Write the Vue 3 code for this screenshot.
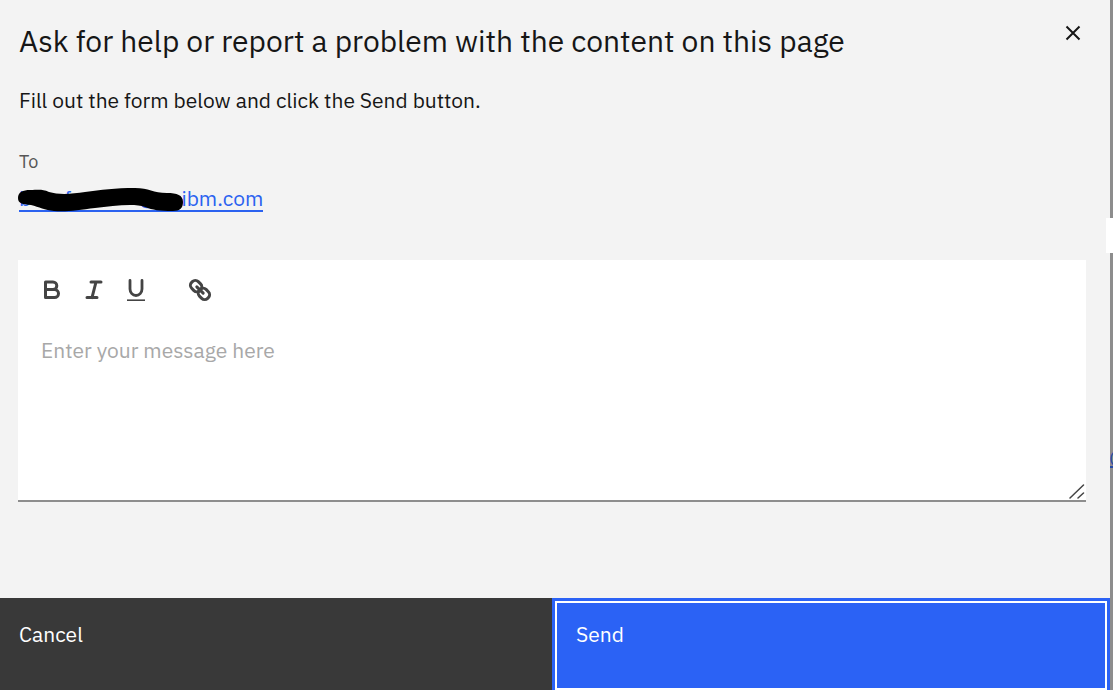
<script setup>
import { ref } from 'vue'

const message = ref('')
</script>

<template>
  <div class="page">
    <form class="dialog" role="dialog" aria-labelledby="dialog-title" @submit.prevent>
      <header class="head">
        <h1 id="dialog-title">Ask for help or report a problem with the content on this page</h1>
        <button class="close" type="button" aria-label="Close">
          <svg viewBox="0 0 16 16" width="16" height="16"><path d="M1.5 1.5l13 13M14.5 1.5l-13 13" /></svg>
        </button>
      </header>

      <div class="body">
        <p class="intro">Fill out the form below and click the Send button.</p>
        <p class="label">To</p>
        <div class="recipient">
          <a href="#">b••••f••••••••@•••ibm.com</a>
          <svg class="mark" viewBox="0 0 168 26" width="168" height="26" aria-hidden="true">
            <path d="M1 11C1 5 6 3 13 3C22 3 25 2 32 5C42 8 55 7 68 5C84 3 98 1 118 1C132 1 136 6 150 6C160 6 166 8 166 15C166 21 163 24 156 24C142 24 136 23 128 20C117 16 96 19 78 21C62 23 50 25 37 24C28 23 22 20 14 18C6 17 1 17 1 11Z" />
          </svg>
        </div>

        <div class="editor">
          <div class="tools">
            <button type="button" aria-label="Bold">
              <svg viewBox="0 0 24 24" width="24" height="24"><path class="heavy" d="M5.5 4h7.5a3.8 3.8 0 0 1 0 7.6H5.500zM5.500 11.600h9a4 4 0 0 1 0 8H5.500z" /></svg>
            </button>
            <button type="button" aria-label="Italic">
              <svg viewBox="0 0 24 24" width="24" height="24"><path class="heavy" d="M9 4h10M5 19.600h10M14 4l-4 15.600" /></svg>
            </button>
            <button type="button" aria-label="Underline">
              <svg viewBox="0 0 24 24" width="24" height="24"><path class="medium" d="M6 2.500v8.500a6 6.500 0 0 0 12 0V2.500" /><path class="thin" d="M3 22.200h18" /></svg>
            </button>
            <button class="link" type="button" aria-label="Insert link">
              <svg viewBox="0 0 24 24" width="24" height="24">
                <g transform="rotate(45 12 12)" class="heavy">
                  <rect x="0.7" y="7.3" width="11.6" height="9.4" rx="4.2" />
                  <rect x="11.7" y="7.3" width="11.6" height="9.4" rx="4.2" />
                  <path d="M7.5 12h9" />
                </g>
              </svg>
            </button>
          </div>
          <textarea v-model="message" aria-label="Message" placeholder="Enter your message here"></textarea>
          <svg class="grip" viewBox="0 0 16 16" width="16" height="16" aria-hidden="true"><path d="M1 14L14.500 1M9 14l5.500-5" /></svg>
        </div>
      </div>

      <footer class="actions">
        <button class="cancel" type="button">Cancel</button>
        <button class="send" type="submit">Send</button>
      </footer>
    </form>
    <div class="behind" aria-hidden="true">
      <div class="patch"></div>
      <span class="far">@</span>
    </div>
  </div>
</template>

<style>
body {
  background: #8d8d8d;
}
</style>

<style scoped>
* {
  box-sizing: border-box;
}
.page {
  display: flex;
  position: relative;
  min-height: 100vh;
  overflow: hidden;
  font-family: "IBM Plex Sans", Roboto, "Liberation Sans", sans-serif;
  font-size: 21px;
  line-height: 28px;
  color: #161616;
}
.dialog {
  flex: 1;
  display: flex;
  flex-direction: column;
  background: #f3f3f3;
}
.behind {
  width: 3px;
  background: #8d8d8d;
}
.patch {
  position: absolute;
  top: 218px;
  right: 0;
  width: 7px;
  height: 35px;
  background: #fff;
}
.far {
  display: block;
  width: 3px;
  margin-top: 444px;
  height: 24px;
  line-height: 26px;
  overflow: hidden;
  text-indent: -1px;
  color: #264ba5;
  border-bottom: 2px solid #264ba5;
}
.head {
  display: flex;
  justify-content: space-between;
  align-items: flex-start;
  padding: 20px 18px 0 19px;
}
h1 {
  margin: 0;
  font-size: 30px;
  line-height: 42px;
  font-weight: 400;
}
button {
  font: inherit;
  border: 0;
  border-radius: 0;
  cursor: pointer;
}
svg {
  display: block;
  fill: none;
  stroke: #444;
  stroke-linecap: round;
  stroke-linejoin: round;
}
.close {
  padding: 5px 11px;
  background: none;
}
.close svg {
  stroke: #161616;
  stroke-width: 2;
  stroke-linecap: butt;
}
.body {
  flex: 1;
  padding: 24px 24px 96px 18px;
}
p {
  margin: 0;
  padding-left: 1px;
}
.label {
  margin-top: 36px;
  font-size: 18px;
  line-height: 24px;
  color: #565656;
}
.recipient {
  position: relative;
  width: fit-content;
  margin-top: 12px;
  padding-left: 1px;
}
.recipient a {
  display: block;
  line-height: 24px;
  border-bottom: 2px solid #2b62f0;
  color: #2b62f0;
  text-decoration: none;
}
.mark {
  position: absolute;
  left: -1px;
  top: 1px;
}
.mark path {
  fill: #000;
  stroke: none;
}
.editor {
  position: relative;
  margin-top: 48px;
  background: #fff;
  border-bottom: 2px solid #8d8d8d;
}
.tools {
  display: flex;
  gap: 18px;
  padding: 18px 22px 0;
}
.tools button {
  padding: 0;
  background: none;
}
.tools .link {
  margin-left: 22px;
}
.heavy {
  stroke-width: 3;
}
.medium {
  stroke-width: 2.8;
}
.thin {
  stroke-width: 1.6;
  stroke-linecap: butt;
}
textarea {
  display: block;
  width: 100%;
  height: 198px;
  padding: 34px 23px;
  border: 0;
  outline: 0;
  resize: none;
  background: none;
  font: inherit;
  color: #161616;
}
textarea::placeholder {
  color: #a8a8a8;
  opacity: 1;
}
.grip {
  position: absolute;
  right: 1px;
  bottom: 0;
}
.grip path {
  stroke-width: 1.5;
}
.actions {
  display: grid;
  grid-template-columns: 552fr 558fr;
  height: 92px;
}
.actions button {
  display: flex;
  align-items: flex-start;
  padding: 22px 19px;
  color: #fff;
}
.actions .cancel {
  background: #393939;
}
.actions .send {
  padding: 19px 21px;
  background: #2b62f5;
  border: 3px solid #2b62f5;
  border-bottom: 0;
  box-shadow: inset 0 0 0 2px #fff;
}
</style>
